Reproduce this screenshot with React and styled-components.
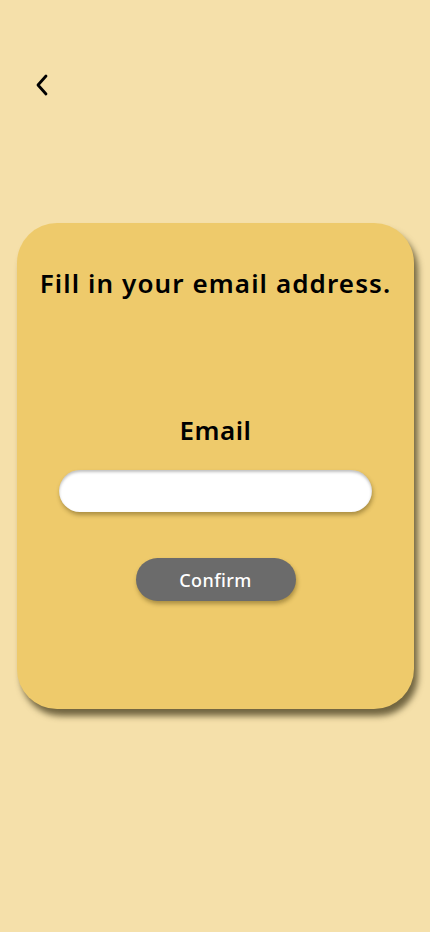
import React from "react";
import styled, { createGlobalStyle } from "styled-components";

const Global = createGlobalStyle`
	html, body {
		margin: 0;
		padding: 0;
		background: #f5e0aa;
		font-family: "Noto Sans", "Lato", sans-serif;
	}
`;

const Page = styled.div`
	width: 430px;
	height: 932px;
	background: #f5e0aa;
	display: flex;
	flex-direction: column;
	box-sizing: border-box;
	padding: 70px 16px 0 17px;
`;

const Back = styled.button`
	width: 30px;
	height: 30px;
	margin-left: 18px;
	padding: 0;
	border: none;
	background: none;
	cursor: pointer;
	display: flex;
	align-items: center;
`;

const Card = styled.div`
	margin-top: 123px;
	height: 486px;
	background: #eeca6b;
	border-radius: 40px;
	box-shadow: 4px 7px 6px rgba(70, 60, 30, 0.75);
	display: flex;
	flex-direction: column;
	align-items: center;
	padding-top: 42px;
	box-sizing: border-box;
`;

const Title = styled.h2`
	margin: 0;
	font-size: 26px;
	font-weight: 600;
	color: #000;
	letter-spacing: 1.1px;
`;

const Label = styled.label`
	margin-top: 111px;
	font-size: 26px;
	font-weight: 600;
	color: #000;
	letter-spacing: 0.5px;
`;

const Input = styled.input`
	margin-top: 22px;
	width: 313px;
	height: 42px;
	box-sizing: border-box;
	border: none;
	border-radius: 21px;
	background: #fff;
	outline: none;
	padding: 0 18px;
	font-size: 16px;
	box-shadow: inset 0 2px 3px rgba(0, 0, 0, 0.25), 1px 3px 4px rgba(90, 70, 20, 0.45);
`;

const Confirm = styled.button`
	margin-top: 46px;
	width: 160px;
	height: 43px;
	border: none;
	border-radius: 22px;
	background: #6b6b6b;
	color: #fff;
	font-family: "Noto Sans", sans-serif;
	font-size: 18px;
	font-weight: 500;
	letter-spacing: 0.4px;
	cursor: pointer;
	box-shadow: 1px 3px 4px rgba(90, 70, 20, 0.45);
`;

export default function App() {
	return (
		<>
			<Global />
			<Page>
				<Back aria-label="back">
					<svg width="14" height="22" viewBox="0 0 14 22">
						<path d="M11 2 L3 11 L11 20" fill="none" stroke="#000" strokeWidth="2.8" strokeLinecap="round" strokeLinejoin="round" />
					</svg>
				</Back>
				<Card>
					<Title>Fill in your email address.</Title>
					<Label htmlFor="email">Email</Label>
					<Input id="email" type="email" />
					<Confirm>Confirm</Confirm>
				</Card>
			</Page>
		</>
	);
}
